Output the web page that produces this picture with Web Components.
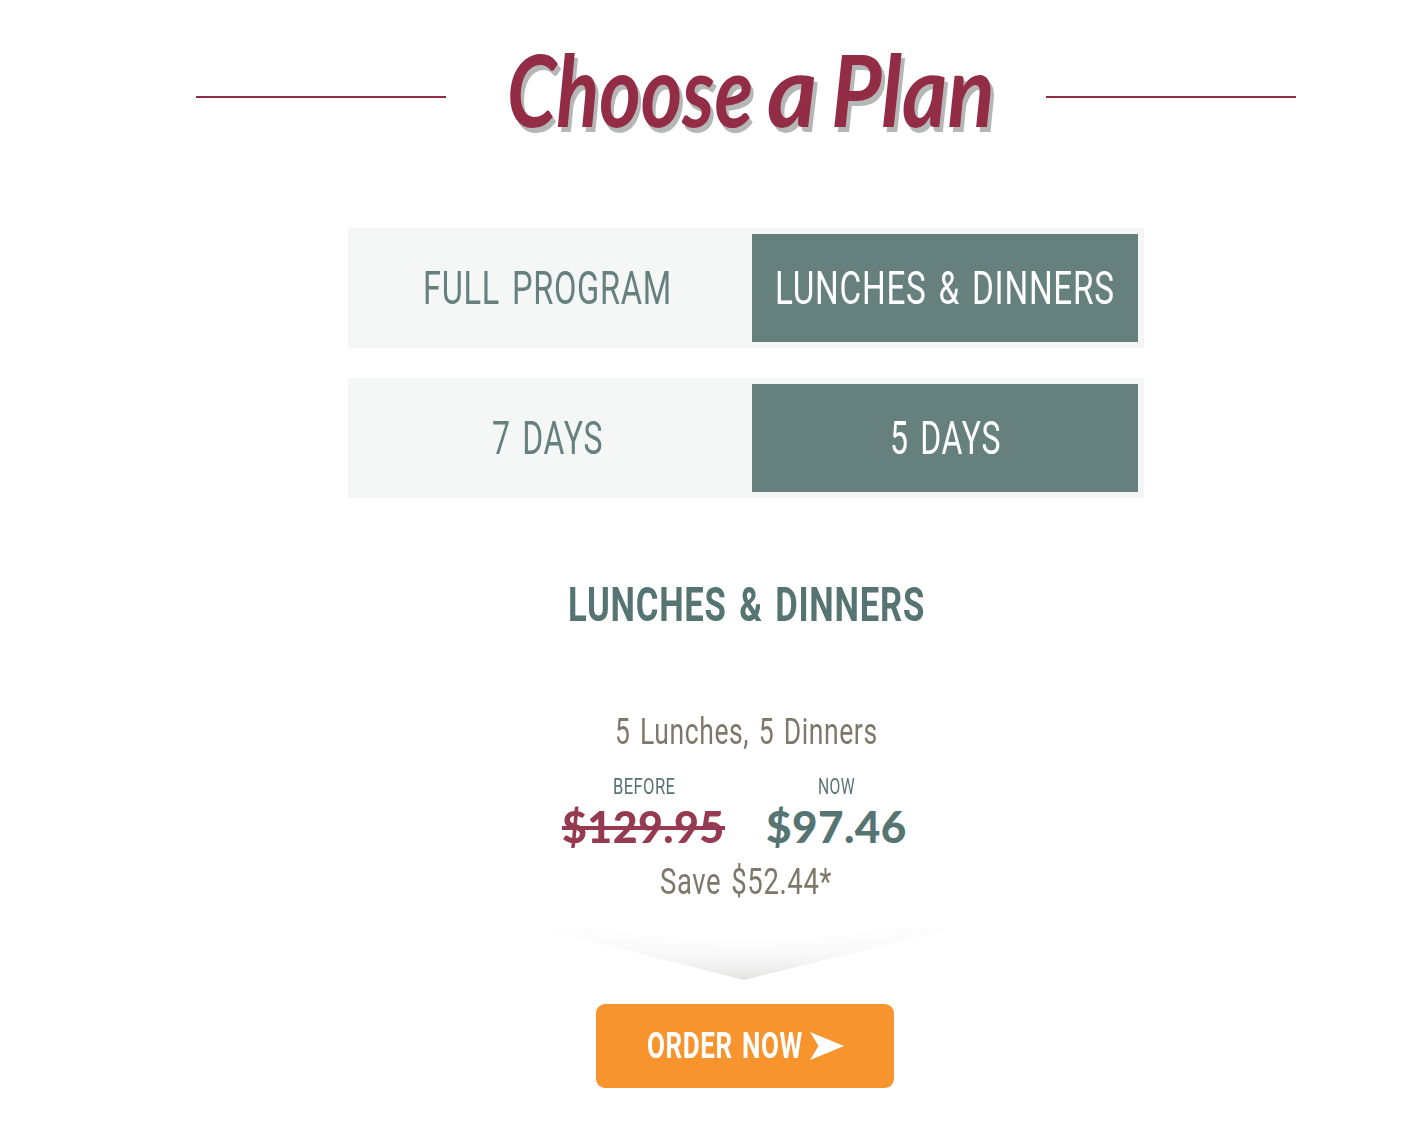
<!DOCTYPE html>
<html lang="en">
<head>
<meta charset="utf-8">
<title>Choose a Plan</title>
<style>
    body {
        margin: 0;
        background: #fff;
        font-family: Roboto, "Liberation Sans", sans-serif;
        color: #567472;
    }
</style>
</head>
<body>
<plan-page>
    <plan-title slot="title">
        <fit-text size="100" width="246">Choose</fit-text>
        <fit-text size="100" width="50">a</fit-text>
        <fit-text size="100" width="164">Plan</fit-text>
    </plan-title>

    <plan-toggle slot="options">
        <plan-option><fit-text size="47" width="249">FULL PROGRAM</fit-text></plan-option>
        <plan-option active><fit-text size="47" width="340">LUNCHES &amp; DINNERS</fit-text></plan-option>
    </plan-toggle>
    <plan-toggle slot="options">
        <plan-option><fit-text size="47" width="111">7 DAYS</fit-text></plan-option>
        <plan-option active><fit-text size="47" width="111">5 DAYS</fit-text></plan-option>
    </plan-toggle>

    <plan-summary>
        <fit-text slot="name" size="48.5" width="357">LUNCHES &amp; DINNERS</fit-text>
        <fit-text slot="meals" size="36.5" width="263">5 Lunches, 5 Dinners</fit-text>
        <plan-price slot="prices" old>
            <fit-text slot="label" size="22" width="62">BEFORE</fit-text>
            <fit-text size="44" width="163">$129.95</fit-text>
        </plan-price>
        <plan-price slot="prices">
            <fit-text slot="label" size="22" width="37">NOW</fit-text>
            <fit-text size="44" width="141">$97.46</fit-text>
        </plan-price>
        <fit-text slot="save" size="36.5" width="172">Save $52.44*</fit-text>
    </plan-summary>

    <order-button slot="action"><fit-text size="37" width="156">ORDER NOW</fit-text></order-button>
</plan-page>

<script>
// One line of text condensed or widened to a given width
class FitText extends HTMLElement {
    constructor() {
        super();
        this.attachShadow({ mode: 'open' }).innerHTML = `
            <style>
                :host {
                    display: block;
                    flex: none;
                    white-space: nowrap;
                    line-height: 1;
                    letter-spacing: var(--tracking, .022em);
                    word-spacing: var(--word-gap, .09em);
                }
                span { display: inline-block; transform-origin: 0 0; vertical-align: top; }
            </style>
            <span><slot></slot></span>
        `;
    }

    connectedCallback() {
        this.style.fontSize = this.getAttribute('size') + 'px';
        this.style.height = this.getAttribute('size') + 'px';
        this.style.width = this.getAttribute('width') + 'px';
    }

    fit() {
        const span = this.shadowRoot.querySelector('span');
        const natural = span.offsetWidth;
        if (natural) {
            span.style.transform = `scaleX(${this.getAttribute('width') / natural})`;
        }
    }
}

class PlanPage extends HTMLElement {
    constructor() {
        super();
        this.attachShadow({ mode: 'open' }).innerHTML = `
            <style>
                :host {
                    display: flex;
                    flex-direction: column;
                    align-items: center;
                    width: 1100px;
                    margin-left: 196px;
                }
                .options {
                    display: flex;
                    flex-direction: column;
                    gap: 30px;
                    margin-top: 34px;
                }
                svg { display: block; margin: 22px 0; }
            </style>
            <slot name="title"></slot>
            <div class="options"><slot name="options"></slot></div>
            <slot></slot>
            <svg width="416" height="54" viewBox="0 0 416 54">
                <defs>
                    <radialGradient id="fade" gradientUnits="userSpaceOnUse" cx="206" cy="-648" r="700">
                        <stop offset=".942" stop-color="#e6e6e4" stop-opacity="0"/>
                        <stop offset=".968" stop-color="#e9ecea" stop-opacity=".4"/>
                        <stop offset="1" stop-color="#e4e4e2"/>
                    </radialGradient>
                    <linearGradient id="ends">
                        <stop offset="0" stop-color="#333"/>
                        <stop offset=".4" stop-color="#fff"/>
                        <stop offset=".6" stop-color="#fff"/>
                        <stop offset="1" stop-color="#333"/>
                    </linearGradient>
                    <mask id="soft"><rect width="416" height="54" fill="url(#ends)"/></mask>
                </defs>
                <path d="M0 0 L206 52 L416 0Z" fill="url(#fade)" mask="url(#soft)"/>
            </svg>
            <slot name="action"></slot>
        `;
    }
}

class PlanTitle extends HTMLElement {
    constructor() {
        super();
        this.attachShadow({ mode: 'open' }).innerHTML = `
            <style>
                :host {
                    display: flex;
                    align-items: center;
                    justify-content: space-between;
                    width: 1100px;
                    height: 194px;
                    color: #922d45;
                }
                i { width: 250px; height: 2px; background: #922d45; }
                div {
                    --tracking: 0;
                    --word-gap: 0;
                    display: flex;
                    gap: 14px;
                    padding: 0 0 19px 10px;
                    font-family: Lato, "Open Sans", sans-serif;
                    font-style: italic;
                    font-weight: 700;
                    text-shadow: 4px 5px 0 #b5b7b6;
                }
            </style>
            <i></i>
            <div><slot></slot></div>
            <i></i>
        `;
    }
}

class PlanToggle extends HTMLElement {
    constructor() {
        super();
        this.attachShadow({ mode: 'open' }).innerHTML = `
            <style>
                :host {
                    display: grid;
                    grid-template-columns: 386px 386px;
                    gap: 12px;
                    padding: 6px;
                    background: #f4f7f6;
                }
            </style>
            <slot></slot>
        `;
    }
}

class PlanOption extends HTMLElement {
    constructor() {
        super();
        this.attachShadow({ mode: 'open' }).innerHTML = `
            <style>
                :host {
                    display: flex;
                    align-items: center;
                    justify-content: center;
                    box-sizing: border-box;
                    height: 108px;
                    padding-bottom: 2px;
                    color: #66807e;
                    cursor: pointer;
                }
                :host([active]) { background: #66807e; color: #fff; }
            </style>
            <slot></slot>
        `;
    }
}

class PlanSummary extends HTMLElement {
    constructor() {
        super();
        this.attachShadow({ mode: 'open' }).innerHTML = `
            <style>
                :host {
                    display: flex;
                    flex-direction: column;
                    align-items: center;
                    height: 325px;
                    margin-top: 83px;
                }
                .name { font-weight: 700; }
                .meals { margin-top: 84px; color: #7d7869; }
                .prices { display: flex; gap: 41px; margin: 26px 0 16px; padding-right: 23px; }
                .save { color: #7d7869; }
            </style>
            <div class="name"><slot name="name"></slot></div>
            <div class="meals"><slot name="meals"></slot></div>
            <div class="prices"><slot name="prices"></slot></div>
            <div class="save"><slot name="save"></slot></div>
        `;
    }
}

class PlanPrice extends HTMLElement {
    constructor() {
        super();
        this.attachShadow({ mode: 'open' }).innerHTML = `
            <style>
                :host { display: flex; flex-direction: column; align-items: center; }
                .amount {
                    --tracking: .01em;
                    position: relative;
                    margin-top: 6px;
                    font-family: Lato, "DejaVu Sans", sans-serif;
                    font-weight: 900;
                }
                :host([old]) .amount { color: #953a50; }
                :host([old]) .amount::after {
                    content: "";
                    position: absolute;
                    left: 0;
                    right: 0;
                    top: 22px;
                    height: 4px;
                    background: #953a50;
                }
            </style>
            <slot name="label"></slot>
            <div class="amount"><slot></slot></div>
        `;
    }
}

class OrderButton extends HTMLElement {
    constructor() {
        super();
        this.attachShadow({ mode: 'open' }).innerHTML = `
            <style>
                :host {
                    display: flex;
                    align-items: center;
                    justify-content: center;
                    gap: 7px;
                    box-sizing: border-box;
                    width: 298px;
                    height: 84px;
                    padding-bottom: 1px;
                    margin-right: 2px;
                    border-radius: 9px;
                    background: #f8942d;
                    color: #fff;
                    font-weight: 700;
                    cursor: pointer;
                }
            </style>
            <slot></slot>
            <svg width="34" height="28" viewBox="0 0 34 28"><path d="M0 0 L34 14 L0 28 L8.500 14Z" fill="#fff"/></svg>
        `;
    }
}

customElements.define('plan-page', PlanPage);
customElements.define('plan-title', PlanTitle);
customElements.define('plan-toggle', PlanToggle);
customElements.define('plan-option', PlanOption);
customElements.define('plan-summary', PlanSummary);
customElements.define('plan-price', PlanPrice);
customElements.define('order-button', OrderButton);
customElements.define('fit-text', FitText);

document.querySelectorAll('fit-text').forEach(text => text.fit());
</script>
</body>
</html>
